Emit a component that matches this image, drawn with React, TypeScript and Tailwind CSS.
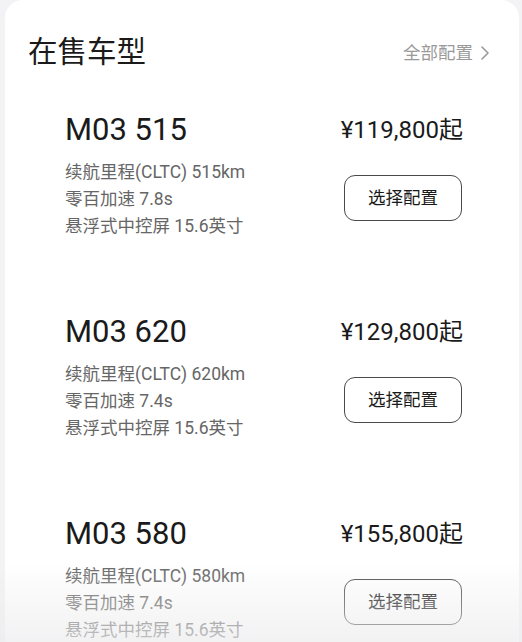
import React from "react";

const models = [
  { name: "M03 515", price: "¥119,800起", range: "515km", acc: "7.8s" },
  { name: "M03 620", price: "¥129,800起", range: "620km", acc: "7.4s" },
  { name: "M03 580", price: "¥155,800起", range: "580km", acc: "7.4s" },
];

export default function App() {
  return (
    <div
      className="w-[522px] h-[642px] overflow-hidden bg-[#f3f3f5] pl-[5px] pr-[3px] relative"
      style={{ fontFamily: 'Roboto, "Noto Sans CJK SC", sans-serif' }}
    >
      <div className="bg-white h-full rounded-t-[18px]">
        <div className="flex items-center justify-between pl-[23px] pr-[29px] pt-[32px]">
          <div className="text-[29.5px] leading-[40px] text-[#1a1a1a]">在售车型</div>
          <div className="flex items-center gap-[7px] text-[17.5px] text-[#9a9a9a] mt-[2px]">
            <span>全部配置</span>
            <svg width="10" height="16" viewBox="0 0 10 16" fill="none">
              <path d="M2 2l6 6-6 6" stroke="#9a9a9a" strokeWidth="1.6" strokeLinecap="round" strokeLinejoin="round" />
            </svg>
          </div>
        </div>
        <div className="flex flex-col pl-[60px] pr-[57px] pt-[36px]">
          {models.map((m) => (
            <div key={m.name} className="flex justify-between h-[202px]">
              <div className="flex flex-col">
                <div className="text-[31px] leading-[44px] text-[#1a1a1a]">{m.name}</div>
                <div className="mt-[7px] flex flex-col text-[17.5px] leading-[27px] text-[#666666]">
                  <span>续航里程(CLTC) {m.range}</span>
                  <span>零百加速 {m.acc}</span>
                  <span>悬浮式中控屏 15.6英寸</span>
                </div>
              </div>
              <div className="flex flex-col items-end">
                <div className="text-[24px] leading-[44px] text-[#1a1a1a] -mr-[1px]">{m.price}</div>
                <button className="mt-[23px] w-[118px] h-[46px] rounded-[11px] border border-[#4a4a4a] text-[17.5px] text-[#1a1a1a] bg-transparent">
                  选择配置
                </button>
              </div>
            </div>
          ))}
        </div>
      </div>
      <div className="absolute left-0 right-0 bottom-0 h-[80px] bg-gradient-to-b from-transparent to-[#ececee]/70 pointer-events-none" />
    </div>
  );
}
